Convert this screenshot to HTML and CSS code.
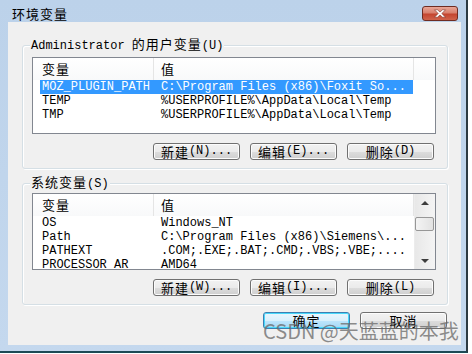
FILE: index.html
```html
<!DOCTYPE html>
<html lang="zh-CN">
  <head>
    <meta charset="UTF-8" />
    <title>环境变量</title>
    <link rel="stylesheet" href="styles.css">
  </head>
  <body>
    <div class="window">
      <!-- title bar -->
      <div class="titlebar">
        <span class="title">环境变量</span>
        <span class="close">
          <svg width="14" height="9" viewBox="0 0 14 9">
            <path d="M1.5 0.8 L4.5 0.8 L7 3 L9.5 0.8 L12.5 0.8 L8.8 4.5 L12.5 8.2 L9.5 8.2 L7 6 L4.5 8.2 L1.5 8.2 L5.2 4.5 Z" fill="#fff" stroke="#7a3428" stroke-width="0.6"/>
          </svg>
        </span>
      </div>

      <div class="client">
        <!-- user variables -->
        <div class="group group-user">
          <div class="group-title">Administrator <span class="cn">的用户变量</span>(U)</div>
          <div class="list">
            <div class="list-main">
              <div class="list-head">
                <div class="head-name cn">变量</div>
                <div class="head-value cn">值</div>
                <div class="head-pad"></div>
              </div>
              <div class="row selected"><span class="col-name">MOZ_PLUGIN_PATH</span><span class="col-value">C:\Program Files (x86)\Foxit So...</span></div>
              <div class="row"><span class="col-name">TEMP</span><span class="col-value">%USERPROFILE%\AppData\Local\Temp</span></div>
              <div class="row"><span class="col-name">TMP</span><span class="col-value">%USERPROFILE%\AppData\Local\Temp</span></div>
            </div>
          </div>
          <div class="buttons">
            <div class="button"><span class="cn">新建</span>(N)...</div>
            <div class="button"><span class="cn">编辑</span>(E)...</div>
            <div class="button"><span class="cn">删除</span>(D)</div>
          </div>
        </div>

        <!-- system variables -->
        <div class="group group-system">
          <div class="group-title"><span class="cn">系统变量</span>(S)</div>
          <div class="list">
            <div class="list-main">
              <div class="list-head">
                <div class="head-name cn">变量</div>
                <div class="head-value cn">值</div>
              </div>
              <div class="row"><span class="col-name">OS</span><span class="col-value">Windows_NT</span></div>
              <div class="row"><span class="col-name">Path</span><span class="col-value">C:\Program Files (x86)\Siemens\...</span></div>
              <div class="row"><span class="col-name">PATHEXT</span><span class="col-value">.COM;.EXE;.BAT;.CMD;.VBS;.VBE;....</span></div>
              <div class="row"><span class="col-name">PROCESSOR_AR</span><span class="col-value">AMD64</span></div>
            </div>
            <div class="scrollbar">
              <div class="arrow"><span class="tri-up"></span></div>
              <div class="track"><div class="thumb"></div></div>
              <div class="arrow"><span class="tri-down"></span></div>
            </div>
          </div>
          <div class="buttons">
            <div class="button"><span class="cn">新建</span>(W)...</div>
            <div class="button"><span class="cn">编辑</span>(I)...</div>
            <div class="button"><span class="cn">删除</span>(L)</div>
          </div>
        </div>

        <div class="dialog-buttons">
          <div class="button default"><span class="cn">确定</span></div>
          <div class="button"><span class="cn">取消</span></div>
        </div>
      </div>

      <div class="watermark">CSDN @天蓝蓝的本我</div>
    </div>
  </body>
</html>
```

FILE: styles.css
```css
body {
  margin: 0;
  background: #ffffff;
  font-family: "Liberation Mono", "Noto Sans CJK SC", monospace;
  font-size: 12px;
  color: #000;
}
.cn {
  font-family: "Noto Sans CJK SC", sans-serif;
  font-size: 13px;
  letter-spacing: 1px;
}

/* window frame */
.window {
  position: relative;
  width: 466px;
  height: 351px;
  background: linear-gradient(#bcd2ea, #c4d8ee);
  border-right: 2px solid #2c3a42;
  border-bottom: 2px solid #1d4a56;
}
.titlebar {
  height: 22px;
  display: flex;
  justify-content: space-between;
  align-items: flex-start;
  padding: 0 8px 0 12px;
  box-sizing: border-box;
}
.title {
  margin-top: 6px;
  line-height: 16px;
  font-family: "Noto Sans CJK SC", sans-serif;
  font-size: 13px;
  letter-spacing: 1px;
}
.close {
  margin-top: 6px;
  width: 36px;
  height: 15px;
  box-sizing: border-box;
  border: 1px solid #6e2c22;
  border-radius: 3px;
  background: linear-gradient(#e9a697 0%, #d9806d 45%, #c4452f 55%, #d0634b 100%);
  display: flex;
  align-items: center;
  justify-content: center;
}
.close svg {
  display: block;
}

/* client area */
.client {
  margin: 0 5px 0 8px;
  height: 323px;
  background: #f0f0f0;
  padding: 23px 13px 0 14px;
  box-sizing: border-box;
}
.group {
  border: 1px solid #d5dfe5;
  border-radius: 3px;
  box-shadow: inset 1px 1px 0 #ffffff, 1px 1px 0 #ffffff;
  padding: 0 11px 8px 9px;
}
.group-system {
  margin-top: 14px;
}
.group-title {
  width: max-content;
  margin: -10px 0 0 -2px;
  padding: 0 1px;
  line-height: 16px;
  height: 16px;
  background: #f0f0f0;
}
.group-user .list {
  margin-top: 5px;
}
.group-system .list {
  margin-top: 3px;
}

/* list view */
.list {
  height: 77px;
  box-sizing: border-box;
  border: 1px solid #828790;
  background: #ffffff;
  display: flex;
  overflow: hidden;
}
.list-main {
  flex: 1;
}
.list-head {
  height: 22px;
  display: flex;
  background: linear-gradient(#ffffff, #f8f9fa);
  line-height: 21px;
}
.head-name {
  width: 111px;
  padding-left: 9px;
  border-right: 1px solid #e5e5e5;
}
.head-value {
  width: 252px;
  padding-left: 7px;
  border-right: 1px solid #e5e5e5;
}
.head-pad {
  flex: 1;
}
.row {
  margin-left: 7px;
  width: 373px;
  height: 14px;
  line-height: 14px;
  display: flex;
  white-space: nowrap;
}
.row.selected {
  background: #3399ff;
  color: #ffffff;
}
.col-name {
  width: 111px;
  padding-left: 2px;
}
.col-value {
  padding-left: 8px;
}

/* scroll bar */
.scrollbar {
  width: 21px;
  display: flex;
  flex-direction: column;
  background: linear-gradient(to right, #e8e8e8, #f4f4f4);
  border-left: 1px solid #ececec;
}
.arrow {
  height: 17px;
  display: flex;
  align-items: center;
  justify-content: center;
}
.tri-up {
  border-left: 4px solid transparent;
  border-right: 4px solid transparent;
  border-bottom: 4px solid #3c3c3c;
}
.tri-down {
  border-left: 4px solid transparent;
  border-right: 4px solid transparent;
  border-top: 4px solid #3c3c3c;
}
.track {
  flex: 1;
}
.thumb {
  margin: 6px 1px 0 0;
  height: 14px;
  box-sizing: border-box;
  border: 1px solid #979797;
  border-radius: 2px;
  background: linear-gradient(to right, #f4f4f4, #e2e2e2);
}

/* buttons */
.buttons {
  display: flex;
  justify-content: flex-end;
  gap: 10px;
  margin-top: 9px;
  padding-right: 2px;
}
.button {
  width: 87px;
  height: 17px;
  box-sizing: border-box;
  border: 1px solid #707070;
  border-radius: 3px;
  background: linear-gradient(#f2f2f2 0%, #ebebeb 50%, #dddddd 51%, #cfcfcf 100%);
  box-shadow: inset 0 0 0 1px #fcfcfc;
  display: flex;
  align-items: center;
  justify-content: center;
  line-height: 15px;
  white-space: nowrap;
}
.button.default {
  border-color: #3c7fb1;
  box-shadow: inset 0 0 0 1px #48d8fb;
  background: linear-gradient(#eaf6fd 0%, #d9f0fc 50%, #bee6fd 51%, #a7d9f5 100%);
}
.dialog-buttons {
  display: flex;
  justify-content: flex-end;
  gap: 10px;
  margin-top: 7px;
  padding-right: 1px;
}

/* watermark over the dialog */
.watermark {
  position: absolute;
  left: 263px;
  top: 318px;
  font-family: "Noto Sans CJK SC", sans-serif;
  font-size: 20px;
  line-height: 26px;
  color: rgba(105, 105, 105, 0.75);
  white-space: nowrap;
}
```
